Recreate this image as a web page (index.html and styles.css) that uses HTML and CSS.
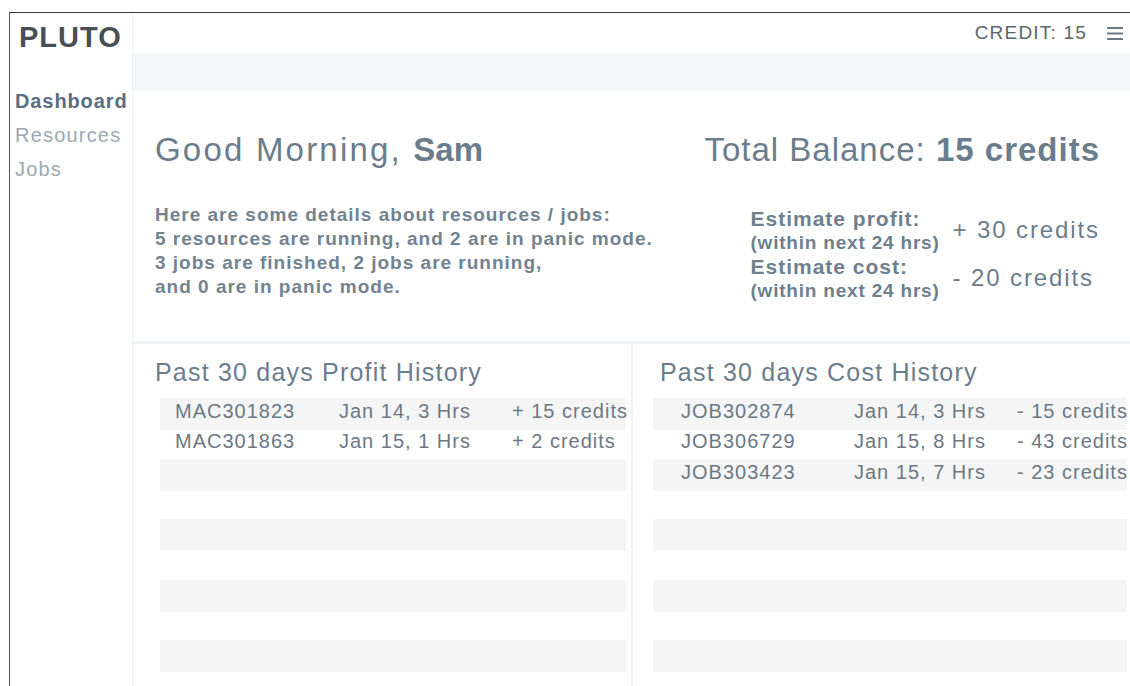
FILE: index.html
```html
<!DOCTYPE html>
<html lang="en">
<head>
<meta charset="utf-8">
<title>Pluto · Dashboard</title>
<link rel="stylesheet" href="styles.css">
</head>
<body>
<div class="app">
  <aside class="sidebar">
    <div class="brand">PLUTO</div>
    <nav class="nav">
      <a class="nav-item active" href="#">Dashboard</a>
      <a class="nav-item" href="#">Resources</a>
      <a class="nav-item" href="#">Jobs</a>
    </nav>
  </aside>

  <main class="main">
    <header class="topbar">
      <span class="credit">CREDIT: 15</span>
      <button class="menu-btn" type="button" aria-label="Menu">
        <svg width="16" height="13" viewBox="0 0 16 13" aria-hidden="true">
          <rect x="0" y="0" width="16" height="2" rx="0.5"/>
          <rect x="0" y="5.5" width="16" height="2" rx="0.5"/>
          <rect x="0" y="11" width="16" height="2" rx="0.5"/>
        </svg>
      </button>
    </header>
    <div class="band"></div>

    <section class="summary">
      <div class="summary-left">
        <h1 class="greeting">Good Morning, <strong>Sam</strong></h1>
        <p class="details">Here are some details about resources / jobs:<br>5 resources are running, and 2 are in panic mode.<br>3 jobs are finished, 2 jobs are running,<br>and 0 are in panic mode.</p>
      </div>
      <div class="summary-right">
        <h2 class="balance">Total Balance: <strong>15 credits</strong></h2>
        <dl class="estimates">
          <dt><span class="est-title">Estimate profit:</span><span class="est-note">(within next 24 hrs)</span></dt>
          <dd>+ 30 credits</dd>
          <dt><span class="est-title">Estimate cost:</span><span class="est-note">(within next 24 hrs)</span></dt>
          <dd>- 20 credits</dd>
        </dl>
      </div>
    </section>

    <section class="history">
      <div class="history-col profit">
        <h3 class="history-title">Past 30 days Profit History</h3>
        <div class="rows">
          <div class="row"><span>MAC301823</span><span>Jan 14, 3 Hrs</span><span>+ 15 credits</span></div>
          <div class="row"><span>MAC301863</span><span>Jan 15, 1 Hrs</span><span>+ 2 credits</span></div>
          <div class="row"></div>
          <div class="row"></div>
          <div class="row"></div>
          <div class="row"></div>
          <div class="row"></div>
          <div class="row"></div>
          <div class="row"></div>
          <div class="row"></div>
        </div>
      </div>
      <div class="history-col cost">
        <h3 class="history-title">Past 30 days Cost History</h3>
        <div class="rows">
          <div class="row"><span>JOB302874</span><span>Jan 14, 3 Hrs</span><span>- 15 credits</span></div>
          <div class="row"><span>JOB306729</span><span>Jan 15, 8 Hrs</span><span>- 43 credits</span></div>
          <div class="row"><span>JOB303423</span><span>Jan 15, 7 Hrs</span><span>- 23 credits</span></div>
          <div class="row"></div>
          <div class="row"></div>
          <div class="row"></div>
          <div class="row"></div>
          <div class="row"></div>
          <div class="row"></div>
          <div class="row"></div>
        </div>
      </div>
    </section>
  </main>
</div>
</body>
</html>
```

FILE: styles.css
```css
* {
  box-sizing: border-box;
}

html,
body {
  height: 100%;
}

body {
  margin: 0;
  padding: 12px 0 0 9px;
  background: #fff;
  font-family: "Liberation Sans", Arial, Helvetica, sans-serif;
  overflow: hidden;
}

/* window frame */
.app {
  display: flex;
  height: 674px;
  border-top: 1px solid #3c3c3c;
  border-left: 1px solid #555;
  overflow: hidden;
}

/* ---------- sidebar ---------- */
.sidebar {
  width: 123px;
  flex: none;
  border-right: 1px solid #edf1f3;
  padding-top: 4px;
}

.brand {
  padding-left: 9px;
  font-size: 29px;
  line-height: 40px;
  font-weight: 700;
  letter-spacing: 1px;
  color: #474f55;
}

.nav {
  margin-top: 27px;
  padding-left: 5px;
  display: flex;
  flex-direction: column;
}

.nav-item {
  font-size: 20px;
  line-height: 34px;
  letter-spacing: 1.2px;
  color: #9ca8b0;
  text-decoration: none;
}

.nav-item.active {
  font-weight: 700;
  letter-spacing: 0.9px;
  color: #5b6e7f;
}

/* ---------- main ---------- */
.main {
  flex: 1;
  min-width: 0;
  display: flex;
  flex-direction: column;
}

.topbar {
  height: 40px;
  flex: none;
  display: flex;
  align-items: center;
  justify-content: flex-end;
  gap: 20px;
  padding-right: 7px;
}

.credit {
  font-size: 19px;
  line-height: 40px;
  letter-spacing: 1.2px;
  color: #5d666d;
}

.menu-btn {
  display: block;
  width: 16px;
  height: 13px;
  padding: 0;
  border: 0;
  background: none;
}

.menu-btn svg {
  display: block;
  fill: #6b7883;
}

.band {
  height: 38px;
  flex: none;
  background: #f4f7f8;
}

/* ---------- summary ---------- */
.summary {
  flex: none;
  display: flex;
  justify-content: space-between;
  padding: 39px 30px 38px 22px;
  border-bottom: 3px solid #eff3f5;
  color: #6b7d8c;
}

.greeting {
  margin: 0;
  font-size: 33px;
  line-height: 40px;
  font-weight: 400;
  letter-spacing: 2.2px;
}

.greeting strong {
  font-weight: 700;
  letter-spacing: 0;
}

.balance strong {
  font-weight: 700;
}

.details {
  margin: 33px 0 0;
  font-size: 19px;
  line-height: 24px;
  font-weight: 700;
  letter-spacing: 1px;
  color: #72838f;
}

.summary-right {
  display: flex;
  flex-direction: column;
  align-items: flex-end;
}

.balance {
  margin: 0;
  font-size: 33px;
  line-height: 40px;
  font-weight: 400;
  letter-spacing: 1px;
}

.estimates {
  margin: 37px 0 0;
  display: grid;
  grid-template-columns: 202px auto;
  color: #6e808e;
}

.estimates dt {
  display: flex;
  flex-direction: column;
}

.est-title {
  font-size: 21px;
  line-height: 24px;
  font-weight: 700;
  letter-spacing: 1px;
}

.est-note {
  font-size: 19px;
  line-height: 24px;
  font-weight: 700;
  letter-spacing: 0.8px;
}

.estimates dd {
  margin: 0;
  align-self: center;
  padding-bottom: 2px;
  font-size: 24px;
  line-height: 28px;
  letter-spacing: 1.9px;
  color: #6b7d8c;
}

/* ---------- history tables ---------- */
.history {
  flex: 1;
  min-height: 0;
  display: flex;
}

.history-col {
  display: flex;
  flex-direction: column;
  padding-top: 13px;
  overflow: hidden;
}

.history-col.profit {
  width: 500px;
  flex: none;
  border-right: 2px solid #eef2f4;
}

.history-col.cost {
  flex: 1;
  min-width: 0;
}

.history-title {
  margin: 0 0 11px;
  font-size: 25px;
  line-height: 30px;
  font-weight: 400;
  letter-spacing: 1.2px;
  color: #6b7d8c;
}

.profit .history-title {
  padding-left: 22px;
}

.cost .history-title {
  padding-left: 27px;
}

.profit .rows {
  margin: 0 5px 0 27px;
}

.cost .rows {
  margin: 0 3px 0 20px;
}

.row {
  display: grid;
  align-items: center;
  height: 28.5px;
  padding-bottom: 6px;
  font-size: 20px;
  line-height: 22px;
  letter-spacing: 1px;
  color: #6b7884;
  white-space: nowrap;
}

.row:nth-child(odd) {
  height: 32px;
  background: #f5f5f5;
}

.profit .row {
  grid-template-columns: 164px 173px 1fr;
  padding-left: 15px;
}

.cost .row {
  grid-template-columns: 173px 163px 1fr;
  padding-left: 28px;
}
```
